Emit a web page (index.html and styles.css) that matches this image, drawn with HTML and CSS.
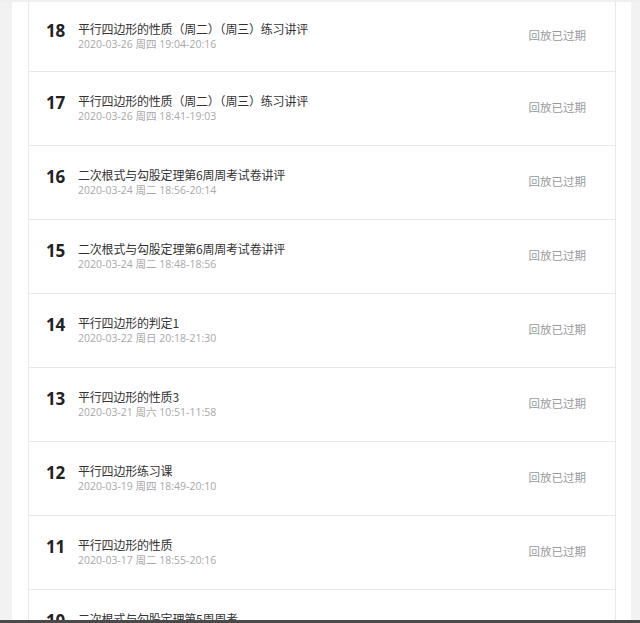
FILE: index.html
```html
<!DOCTYPE html>
<html lang="zh">
<head>
<meta charset="utf-8">
<title>回放列表</title>
<link rel="stylesheet" href="styles.css">
</head>
<body>
<div class="page">
  <div class="side side-left"></div>
  <main class="main">
    <ul class="list">
      <li class="row row-first"><span class="num">18</span><div class="info"><div class="title">平行四边形的性质（周二）（周三）练习讲评</div><div class="date">2020-03-26 周四 19:04-20:16</div></div><span class="status">回放已过期</span></li>
      <li class="row"><span class="num">17</span><div class="info"><div class="title">平行四边形的性质（周二）（周三）练习讲评</div><div class="date">2020-03-26 周四 18:41-19:03</div></div><span class="status">回放已过期</span></li>
      <li class="row"><span class="num">16</span><div class="info"><div class="title">二次根式与勾股定理第6周周考试卷讲评</div><div class="date">2020-03-24 周二 18:56-20:14</div></div><span class="status">回放已过期</span></li>
      <li class="row"><span class="num">15</span><div class="info"><div class="title">二次根式与勾股定理第6周周考试卷讲评</div><div class="date">2020-03-24 周二 18:48-18:56</div></div><span class="status">回放已过期</span></li>
      <li class="row"><span class="num">14</span><div class="info"><div class="title">平行四边形的判定1</div><div class="date">2020-03-22 周日 20:18-21:30</div></div><span class="status">回放已过期</span></li>
      <li class="row"><span class="num">13</span><div class="info"><div class="title">平行四边形的性质3</div><div class="date">2020-03-21 周六 10:51-11:58</div></div><span class="status">回放已过期</span></li>
      <li class="row"><span class="num">12</span><div class="info"><div class="title">平行四边形练习课</div><div class="date">2020-03-19 周四 18:49-20:10</div></div><span class="status">回放已过期</span></li>
      <li class="row"><span class="num">11</span><div class="info"><div class="title">平行四边形的性质</div><div class="date">2020-03-17 周二 18:55-20:16</div></div><span class="status">回放已过期</span></li>
      <li class="row"><span class="num">10</span><div class="info"><div class="title">二次根式与勾股定理第5周周考</div><div class="date">2020-03-15 周日 19:00-20:10</div></div><span class="status">回放已过期</span></li>
    </ul>
  </main>
  <div class="side side-right"></div>
</div>
<div class="bottom-bar"></div>
</body>
</html>
```
FILE: styles.css
```css
html, body {
  margin: 0;
  padding: 0;
  height: 100%;
  overflow: hidden;
  background: #fff;
}
body {
  font-family: "Noto Sans CJK SC", "Noto Sans", sans-serif;
}
.page {
  display: flex;
  height: 623px;
  border-top: 2px solid #efefef;
  box-sizing: border-box;
}
.side {
  background: #f2f2f2;
  flex: none;
}
.side-left {
  width: 12px;
}
.side-right {
  width: 9px;
}
.main {
  flex: 1;
  padding: 0 15px 0 16px;
  overflow: hidden;
}
.list {
  list-style: none;
  margin: 0;
  padding: 0;
  border-left: 1px solid #e8e8e8;
  border-right: 1px solid #e8e8e8;
}
.row {
  display: flex;
  align-items: center;
  height: 73px;
  border-bottom: 1px solid #e8e8e8;
  padding: 0 29px 0 17px;
}
.row-first {
  height: 69px;
}
.num {
  width: 32px;
  flex: none;
  font-family: "Open Sans", "Noto Sans", sans-serif;
  font-weight: 700;
  font-size: 17px;
  color: #222;
  letter-spacing: -0.2px;
  margin-bottom: 12px;
}
.info {
  flex: 1;
}
.title {
  font-size: 12px;
  line-height: 16px;
  color: #333;
  letter-spacing: -0.2px;
}
.date {
  font-family: "Open Sans", "Noto Sans", "Noto Sans CJK SC", sans-serif;
  font-size: 10.5px;
  line-height: 15px;
  color: #a8a8a8;
}
.status {
  font-size: 11.5px;
  color: #999;
  margin-bottom: 4px;
}
.bottom-bar {
  position: fixed;
  left: 0;
  right: 0;
  bottom: 0;
  height: 3px;
  background: #4a4a4a;
}
```
